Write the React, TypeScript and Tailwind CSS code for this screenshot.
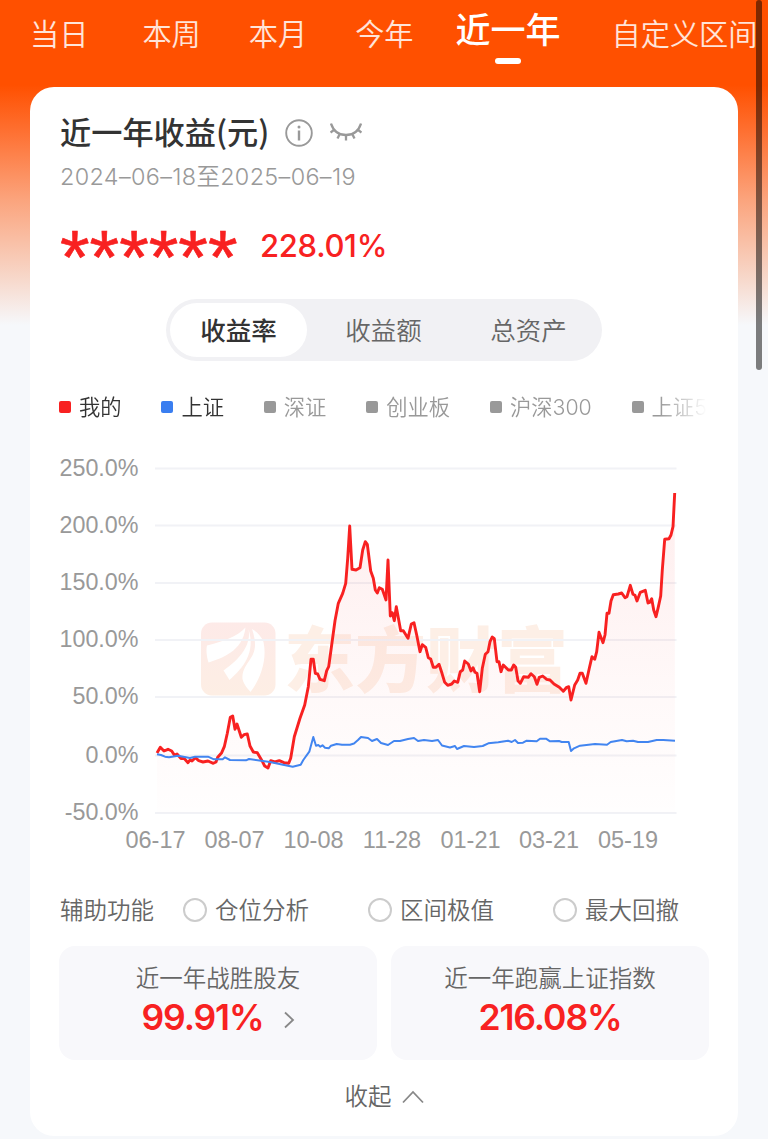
import React, { useState } from "react";

const RED = "#f82121";

const tabs = [
  { label: "当日", className: "ml-[30px]" },
  { label: "本周", className: "ml-[54px]" },
  { label: "本月", className: "ml-[48px]" },
  { label: "今年", className: "ml-[48px]" },
  { label: "近一年", className: "ml-[42px]" },
  { label: "自定义区间", className: "ml-[51px]" },
];

const series = [
  { label: "我的", dot: "bg-[#f82121]", text: "text-[#333]" },
  { label: "上证", dot: "bg-[#3a7ef0]", text: "text-[#333]" },
  { label: "深证", dot: "bg-[#999]", text: "text-[#999]" },
  { label: "创业板", dot: "bg-[#999]", text: "text-[#999]" },
  { label: "沪深300", dot: "bg-[#999]", text: "text-[#999]" },
  { label: "上证50", dot: "bg-[#999]", text: "text-[#999]" },
];

const yTicks = [
  { y: 468.5, label: "250.0%" },
  { y: 525.5, label: "200.0%" },
  { y: 583, label: "150.0%" },
  { y: 640, label: "100.0%" },
  { y: 697, label: "50.0%" },
  { y: 755.5, label: "0.0%" },
  { y: 813, label: "-50.0%" },
];

const xTicks = [
  { x: 155.5, label: "06-17" },
  { x: 234.5, label: "08-07" },
  { x: 313.5, label: "10-08" },
  { x: 392, label: "11-28" },
  { x: 470.5, label: "01-21" },
  { x: 549, label: "03-21" },
  { x: 628, label: "05-19" },
];

const mine =
  "157,753 160.3,747.3 164,751 168,749.3 171.7,751 174.3,755 177,754 181,758.5 184,758.3 188,762.7 190,760 192,761 195.3,757.7 198.7,760.7 203,762 208,761 213.3,763.3 216,762 217.7,757.3 221.7,752.7 224.3,746.7 227.3,733.3 230.3,717.3 232.7,716 235,729.3 237,724 241.3,737.3 244,734.7 247.3,734 250,746 253.3,752 257.3,752.7 262,760.7 264.7,766 268,768 270.7,760.7 274.7,762 279.3,760.7 284,762.7 288.7,763.3 290.7,758.3 294.3,736.7 300,718.3 304.7,705 308.3,686.7 311,659.3 313.3,659.3 315.3,673.3 317.7,674 320,679.3 324.3,680.7 326.7,670.7 328.7,666.7 335,620.7 338.3,603.3 342.7,593.3 345.7,583.3 347.7,558.3 349.7,526 352,569.3 356,570 360,567.7 362.7,550 365.3,541.7 367.3,544.3 370.7,571 373.3,578.3 375.3,590 377.3,593 379.3,587.7 382.3,589.3 386,600 388,560 390.3,616 392.3,612.7 394.3,620.7 396.3,606.7 400.7,630.7 403.3,630.7 408,638.3 411.3,624 414,622.7 416.7,635 420,651.7 422.3,644.7 425.7,647.3 428.3,657.7 430.7,659 433.3,667.3 436,667.3 439,664.3 442,673.3 444.7,682.3 447.7,685.3 451.7,684 454.3,681 457.7,682.3 460.3,671.7 462.7,670 464.7,661 468.3,664 471,671 473,667.7 475,672.3 477,673.3 479.7,691.7 482.3,668.3 485.3,654.3 488,651.7 490,641.7 492.3,637 494.3,638.7 497,661.7 499,661.7 501,671.7 503.3,665 508.3,670 511.3,670 513.7,665 515.7,667.3 518,680.7 520.3,683.3 523.7,676.7 528.3,677.3 531,673.7 534.3,676.7 537,684.3 539.3,677.3 542.7,676 546.7,679.3 550,680 554,684 559.3,687.3 563.3,691.3 566.7,687.3 568.7,686.7 571,700 574.7,685 577.7,680 580,673.3 582.3,673.3 586,683.3 589.3,668.3 592,656.7 594.7,659.3 596.7,651.7 599,632.3 603,642.7 605,635 607,613.3 609,613.3 611,601 613.3,594.7 618.3,594 621.7,593 625,597.7 627,596.7 630.3,585.3 633,594.3 635,595.3 637,601 640.3,592.3 645.3,590.3 648,603 649.7,602.3 651.7,598.7 653.7,610 656,616.7 658,608.3 660.7,596 662.3,570 664.7,539.3 669,538.7 671,535 673,526.7 674.7,493";

const shanghai =
  "157,754.3 161,755 165,756.7 169,757.3 178,755.7 190,758 195,756.7 208,756.7 214,759.3 222.7,759.3 225,757.3 230,760 246,760.3 249,759 270,762 283,764.7 292.7,766.7 300.7,764.7 303.3,760 309.3,751.7 313.3,737 316,745.7 318.3,745 320.3,746.7 322.5,745.3 325,747.7 328.7,748.3 331,745.7 336.7,744 342,744.7 350,744.7 354,743.5 358,740 361,737 368,738 372,741 377,739 381,743 388,745 394,741 400,741 408,739 414,738 418,741 424,740 432,741 438,740 442,745.5 450,747.5 455,746 457,749 464,746 474,747 482.7,746 488.3,743.3 498.3,742.3 508,740.7 511.7,742 515,740 518,743 523,742.7 526.7,740.7 536.7,741.3 540,738.7 546,738.7 550,741.3 559,741 561.7,742 568.7,742 571,751 574,748.3 580,745.7 595,744 607,744.7 610.7,742 622,740 626.7,741.3 633,740.7 638,742 648,742 656.7,740 663.3,740 675,740.7";

function ProfitChart() {
  return (
    <svg
      className="mt-[17px] -ml-[2px] block h-[420px] w-[650px] shrink-0"
      viewBox="58 440 650 420"
      fontFamily="'Liberation Sans', sans-serif"
    >
      <defs>
        <linearGradient id="area" x1="0" y1="493" x2="0" y2="813" gradientUnits="userSpaceOnUse">
          <stop offset="0" stopColor={RED} stopOpacity="0.08" />
          <stop offset="0.6" stopColor={RED} stopOpacity="0.03" />
          <stop offset="1" stopColor={RED} stopOpacity="0.005" />
        </linearGradient>
        <linearGradient id="mark" x1="0" y1="0" x2="0" y2="1">
          <stop offset="0" stopColor="#fdeae8" />
          <stop offset="1" stopColor="#fdeee4" />
        </linearGradient>
      </defs>

      {/* watermark */}
      <rect x="201" y="622.5" width="74.5" height="73" rx="11" fill="url(#mark)" />
      <g fill="#fff">
        <path d="M245.5 627.5C237 637 223 641.5 207 645.5C206 649.5 206.5 656 208.5 662.5C221 658.5 243 651.5 245.5 627.5Z" />
        <path d="M248.5 629C251.5 645 240 659 223.5 670.5L229.5 680C243 668 256 653 248.5 629Z" />
        <path d="M252 629C258 647 254 654 249 661C244 668 242 673 242.5 679C244 685 248 689 250.5 692C260 680 267.5 660 263.5 642C261 636 257 632 252 629Z" />
      </g>
      <text
        x="284"
        y="685.5"
        fontSize="71"
        fontWeight="900"
        fill="#fdefe6"
        fontFamily="'Noto Sans CJK SC', sans-serif"
      >
        东方财富
      </text>

      {yTicks.map((t) => (
        <g key={t.label}>
          <line x1="155" x2="676.5" y1={t.y} y2={t.y} stroke="#f1f2f6" strokeWidth="1.8" />
          <text x="138.5" y={t.y + 7} fontSize="23.3" textAnchor="end" fill="#999">
            {t.label}
          </text>
        </g>
      ))}
      {xTicks.map((t) => (
        <text key={t.label} x={t.x} y="848" fontSize="23.5" textAnchor="middle" fill="#999">
          {t.label}
        </text>
      ))}

      <polygon points={`157,813 ${mine} 675,813`} fill="url(#area)" />
      <polyline points={mine} fill="none" stroke={RED} strokeWidth="2.9" strokeLinejoin="round" />
      <polyline points={shanghai} fill="none" stroke="#4285f0" strokeWidth="2" strokeLinejoin="round" />
    </svg>
  );
}

export default function App() {
  const [active, setActive] = useState("近一年");
  const [mode, setMode] = useState("收益率");

  return (
    <div className="relative h-[1139px] w-[768px] overflow-hidden bg-[#f6f8fb] bg-[linear-gradient(to_bottom,#ff5000_0px,#ff5000_85px,#fe6f30_130px,#fba47d_200px,#f7d9cc_280px,#f6f8fb_325px)] font-['Inter','Noto_Sans_CJK_SC',sans-serif]">
      <nav className="flex h-[87px] items-start whitespace-nowrap">
        {tabs.map((t) => (
          <button
            key={t.label}
            onClick={() => setActive(t.label)}
            className={`${t.className} shrink-0 ${
              active === t.label
                ? "flex flex-col items-center text-[35px] leading-[60px] font-medium text-white"
                : "text-[29.2px] leading-[69px] font-[350] text-white/85"
            }`}
          >
            {t.label}
            {active === t.label && <span className="-mt-[2px] h-[6px] w-[26px] rounded-full bg-white" />}
          </button>
        ))}
      </nav>

      <main className="mx-[30px] flex h-[1049px] flex-col rounded-[24px] bg-white px-[30px]">
        <div className="mt-[24px] flex h-10 items-center">
          <h1 className="text-[31.2px] leading-10 font-medium text-[#333] font-['Noto_Sans_CJK_SC',sans-serif]">
            近一年收益(元)
          </h1>
          <svg className="mt-[3px] ml-[16px] size-7" viewBox="0 0 28 28" fill="none" stroke="#999">
            <circle cx="14" cy="14" r="12.8" strokeWidth="1.9" />
            <path d="M14 11.5V21.5" strokeWidth="2.4" />
            <circle cx="14" cy="8" r="1.5" fill="#999" stroke="none" />
          </svg>
          <svg className="mt-[2px] ml-[17px] h-5 w-8" viewBox="0 0 32 20" fill="none" stroke="#999" strokeWidth="2.3">
            <path d="M1 1.500C3.500 9 9 13 16 13S28.500 9 31 1.500" />
            <path d="M4.500 7.500L0.500 10.500M10 11.500L7.500 16.500M16 13V18.500M22 11.500L24.500 16.500M27.500 7.500L31.500 10.500" />
          </svg>
        </div>
        <p className="mt-[10px] h-8 text-[23.4px] leading-8 font-[350] tracking-[0.35px] whitespace-nowrap text-[#999]">
          2024–06–18至2025–06–19
        </p>

        <div className="mt-[31px] flex h-[44px] items-center text-[#f82121]">
          <span className="h-[44px] w-[200px] text-[76px] leading-[66px] font-['Liberation_Sans',sans-serif] [-webkit-text-stroke:0.6px_#f82121]">
            ******
          </span>
          <span className="text-[31px] font-medium tracking-[-0.3px]">228.01%</span>
        </div>

        <div className="mt-[31px] ml-[106px] flex h-[62px] w-[436px] rounded-full bg-[#f1f1f4] p-1">
          {["收益率", "收益额", "总资产"].map((m) => (
            <button
              key={m}
              onClick={() => setMode(m)}
              className={`w-[137px] rounded-full pt-[2px] text-[25.5px] not-first:ml-[8px] ${
                mode === m ? "bg-white font-medium text-[#333]" : "font-[350] text-[#666]"
              }`}
            >
              {m}
            </button>
          ))}
        </div>

        <div className="-ml-[1px] mt-[30px] flex h-8 w-[649px] shrink-0 items-center gap-[39.8px] overflow-hidden whitespace-nowrap mask-r-from-[600px] mask-r-to-[648px]">
          {series.map((s) => (
            <span key={s.label} className="flex shrink-0 items-center gap-2">
              <i className={`size-3 rounded-[2px] ${s.dot}`} />
              <span className={`text-[21.3px] leading-8 font-[350] ${s.text}`}>{s.label}</span>
            </span>
          ))}
        </div>

        <ProfitChart />

        <div className="mt-[34px] flex h-8 shrink-0 items-center text-[23.5px] leading-[34px] font-[350] whitespace-nowrap text-[#666]">
          <span className="w-[123px] shrink-0 pt-px">辅助功能</span>
          {["仓位分析", "区间极值", "最大回撤"].map((f) => (
            <label key={f} className="flex w-[185px] shrink-0 items-center gap-2 last:w-auto">
              <i className="size-6 rounded-full border-2 border-[#ccc]" />
              <span className="pt-px">{f}</span>
            </label>
          ))}
        </div>

        <div className="-mx-px mt-[20px] grid h-[114px] shrink-0 grid-cols-2 gap-[14px]">
          <div className="rounded-[16px] bg-[#f8f8fb] pt-[17px] text-center">
            <p className="text-[23.5px] leading-8 font-[350] text-[#666]">近一年战胜股友</p>
            <div className="flex items-center justify-center gap-[20px] text-[35.5px] leading-[46px] font-semibold tracking-[-1.1px] text-[#f82121]">
              99.91%
              <svg className="mt-1 h-[18px] w-[11px]" viewBox="0 0 11 18" fill="none" stroke="#888" strokeWidth="1.8">
                <path d="M1 1.5L9 9L1 16.5" />
              </svg>
            </div>
          </div>
          <div className="rounded-[16px] bg-[#f8f8fb] pt-[17px] text-center">
            <p className="text-[23.5px] leading-8 font-[350] text-[#666]">近一年跑赢上证指数</p>
            <p className="text-[35.5px] leading-[46px] font-semibold tracking-[-1.1px] text-[#f82121]">216.08%</p>
          </div>
        </div>

        <button className="mt-[21px] flex h-8 items-center justify-center gap-[10px] text-[23.5px] leading-8 font-[350] text-[#666]">
          收起
          <svg className="h-[14px] w-[22px]" viewBox="0 0 22 14" fill="none" stroke="#888" strokeWidth="1.8">
            <path d="M1 12.5L11 2L21 12.5" />
          </svg>
        </button>
      </main>

      {/* scroll indicator */}
      <div className="absolute top-0 left-[756px] h-[370px] w-[6px] rounded-full bg-black/50" />
    </div>
  );
}
